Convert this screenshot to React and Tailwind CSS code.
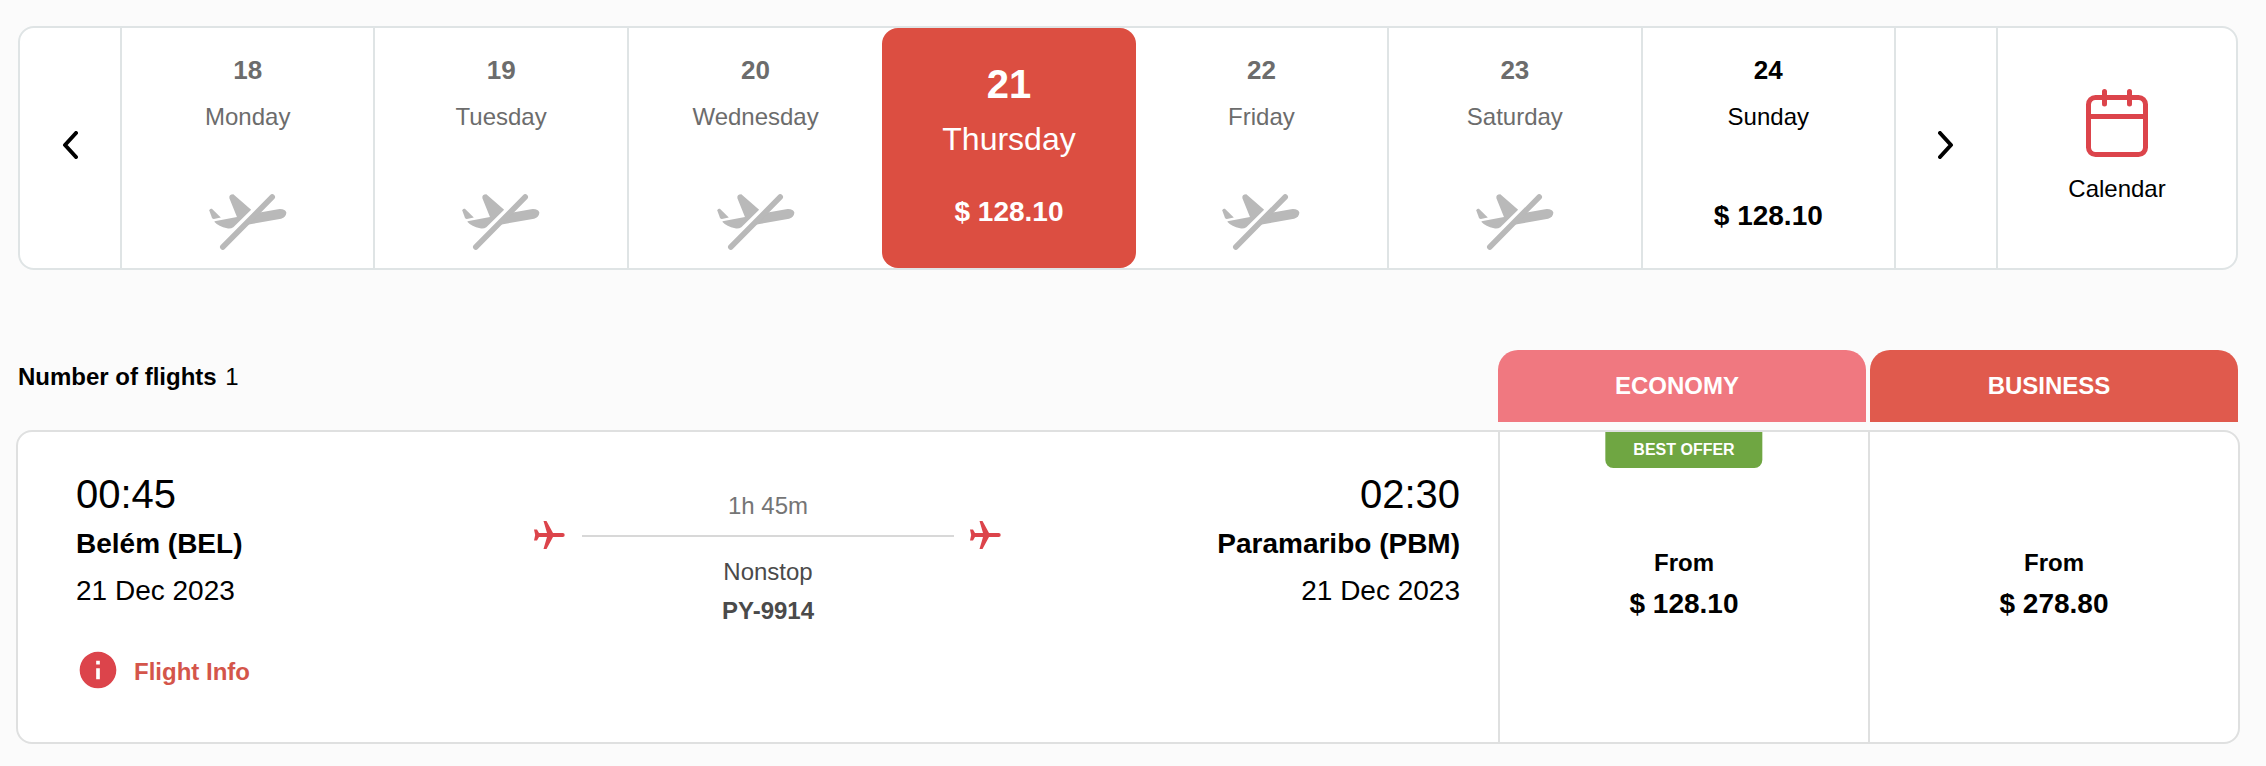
import React, { useState } from 'react';

const DAYS = [
    { date: 18, weekday: 'Monday' },
    { date: 19, weekday: 'Tuesday' },
    { date: 20, weekday: 'Wednesday' },
    { date: 21, weekday: 'Thursday', price: '$ 128.10' },
    { date: 22, weekday: 'Friday' },
    { date: 23, weekday: 'Saturday' },
    { date: 24, weekday: 'Sunday', price: '$ 128.10' },
];

const FLIGHT = {
    from: { time: '00:45', city: 'Belém (BEL)', date: '21 Dec 2023' },
    to: { time: '02:30', city: 'Paramaribo (PBM)', date: '21 Dec 2023' },
    duration: '1h 45m',
    stops: 'Nonstop',
    number: 'PY-9914',
    fares: [
        { cabin: 'Economy', price: '$ 128.10', best: true },
        { cabin: 'Business', price: '$ 278.80' },
    ],
};

const NoFlightIcon = () => (
    <svg viewBox="627 551 235 170" className="w-[78px] h-[56px] text-[#b9b9b9]" fill="currentColor" aria-hidden="true">
        <path d="M627 601Q628 594 635 596L662 622L641 627Q637 627 635 623Z" />
        <path d="M643 634L711 621L688 564Q686 552 700 552L754 599L700 652Q692 657 681 655Q655 650 643 636Z" />
        <path d="M780 607L836 597Q858 595 861 608Q860 621 845 626L738 645Z" />
        <path d="M818 560L668 712" stroke="currentColor" strokeWidth="17" strokeLinecap="round" />
    </svg>
);

const PlaneIcon = () => (
    <svg viewBox="0 0 32 32" className="w-8 h-8 shrink-0 text-[#dc444b]" fill="currentColor" aria-hidden="true">
        <path d="M9.500 1h3l6.500 12h9.700a2 2 0 0 1 0 4H19l-6.500 12h-3l3.500-12H5l-2 3.500H0l1.200-5.500L0 9.500h3l2 3.500h8z" />
    </svg>
);

const ChevronIcon = ({ d }) => (
    <svg viewBox="0 0 16 28" className="w-4 h-7" fill="none" stroke="currentColor" strokeWidth="4" strokeLinecap="round" strokeLinejoin="round" aria-hidden="true">
        <path d={d} />
    </svg>
);

const CalendarIcon = () => (
    <svg viewBox="0 0 62 68" className="w-[62px] h-[68px]" fill="none" stroke="#dc444b" strokeWidth="5" strokeLinecap="round" aria-hidden="true">
        <rect x="2.500" y="8.500" width="57" height="57" rx="7" />
        <path d="M3 27.500h56M18.500 2.500v12.500M43.500 2.500v12.500" />
    </svg>
);

const InfoIcon = () => (
    <svg viewBox="0 0 24 24" className="w-11 h-11" fill="#dc444b" aria-hidden="true">
        <path d="M12 2C6.480 2 2 6.480 2 12s4.480 10 10 10 10-4.480 10-10S17.520 2 12 2zm1 15h-2v-6h2v6zm0-8h-2V7h2v2z" />
    </svg>
);

const DayCell = ({ day, selected, divider, onSelect }) => {
    if (selected) {
        return (
            <button
                type="button"
                aria-pressed="true"
                className="flex flex-col items-center rounded-2xl bg-[#dc4e41] text-white pt-8 pb-10"
            >
                <span className="text-[40px] leading-[48px] font-bold">{day.date}</span>
                <span className="mt-[13px] text-[32px] leading-[36px]">{day.weekday}</span>
                <span className="mt-auto text-[28px] leading-[32px] font-bold">{day.price}</span>
            </button>
        );
    }

    return (
        <button
            type="button"
            aria-pressed="false"
            onClick={onSelect}
            className={`flex flex-col items-center pt-[25px] ${divider ? 'border-r-2 border-[#dfe4e5]' : ''} ${day.price ? 'text-black pb-9' : 'text-[#6c6c6c] pb-[18px]'}`}
        >
            <span className="text-[26px] leading-[34px] font-bold">{day.date}</span>
            <span className="mt-4 text-[24px] leading-[28px]">{day.weekday}</span>
            <span className="mt-auto text-[28px] leading-[32px] font-bold">{day.price || <NoFlightIcon />}</span>
        </button>
    );
};

const DateStrip = () => {
    const [selected, setSelected] = useState(21);

    return (
        <section className="mx-[2px] flex h-[244px] rounded-2xl border-2 border-[#dfe4e5] bg-white">
            <button type="button" aria-label="Previous days" className="w-[102px] pb-[6px] flex items-center justify-center border-r-2 border-[#dfe4e5]">
                <ChevronIcon d="M14 2L3 14L14 26" />
            </button>
            <div className="flex-1 grid grid-cols-7">
                {DAYS.map((day, i) => (
                    <DayCell
                        key={day.date}
                        day={day}
                        selected={day.date === selected}
                        divider={DAYS[i + 1]?.date !== selected}
                        onSelect={() => setSelected(day.date)}
                    />
                ))}
            </div>
            <button type="button" aria-label="Next days" className="w-[102px] pb-[6px] flex items-center justify-center border-r-2 border-[#dfe4e5]">
                <ChevronIcon d="M2 2L13 14L2 26" />
            </button>
            <button type="button" className="w-[238px] pb-1 flex flex-col items-center justify-center gap-[18px]">
                <CalendarIcon />
                <span className="text-[24px] leading-[28px]">Calendar</span>
            </button>
        </section>
    );
};

const Stop = ({ stop, className }) => (
    <div className={className}>
        <p className="text-[40px] leading-[52px]">{stop.time}</p>
        <p className="text-[28px] leading-[47px] font-bold">{stop.city}</p>
        <p className="text-[28px] leading-[47px]">{stop.date}</p>
    </div>
);

const FareCell = ({ fare }) => (
    <button type="button" className="relative w-[370px] flex flex-col items-center justify-center border-l-2 border-[#dfe0e0] pb-1">
        {fare.best && (
            <span className="absolute top-0 left-1/2 -translate-x-1/2 rounded-b-lg bg-[#6fa642] px-7 text-[16px] leading-[36px] font-bold text-white whitespace-nowrap">
                BEST OFFER
            </span>
        )}
        <span className="text-[24px] leading-[37px] font-bold">From</span>
        <span className="text-[28px] leading-[46px] font-bold">{fare.price}</span>
    </button>
);

const FlightCard = ({ flight }) => (
    <article className="mt-2 flex rounded-2xl border-2 border-[#dfe0e0] bg-white">
        <div className="flex-1 pt-9 pb-[50px] pl-[58px] pr-[38px]">
            <div className="grid grid-cols-[1fr_468px_1fr]">
                <Stop stop={flight.from} />
                <div className="pt-6 text-center text-[24px] text-[#4a4a4a]">
                    <p className="leading-[28px] text-[#757575]">{flight.duration}</p>
                    <div className="flex items-center justify-between gap-4">
                        <PlaneIcon />
                        <span className="flex-1 h-[2px] bg-[#d8d8d8]" />
                        <PlaneIcon />
                    </div>
                    <p className="leading-[39px]">{flight.stops}</p>
                    <p className="leading-[39px] font-bold">{flight.number}</p>
                </div>
                <Stop stop={flight.to} className="text-right" />
            </div>
            <button type="button" className="mt-[18px] flex items-end gap-[14px] text-[24px] leading-[40px] font-bold text-[#d4554a]">
                <InfoIcon />
                Flight Info
            </button>
        </div>
        {flight.fares.map((fare) => (
            <FareCell key={fare.cabin} fare={fare} />
        ))}
    </article>
);

const App = () => (
    <main className="min-h-screen bg-[#fbfbfb] pt-[26px] pb-[22px] pl-4 pr-[26px] font-['Liberation_Sans',Arial,sans-serif] text-black">
        <DateStrip />
        <div className="mx-[2px] mt-20 flex items-start justify-between">
            <h2 className="pt-[13px] text-[24px] leading-[28px] font-bold">
                Number of flights <span className="ml-[2px] font-normal">1</span>
            </h2>
            <div className="flex gap-1 text-[24px] font-bold text-white">
                <button type="button" className="w-[368px] h-[72px] pr-[10px] rounded-t-[20px] bg-[#f07880]">ECONOMY</button>
                <button type="button" className="w-[368px] h-[72px] pr-[10px] rounded-t-[20px] bg-[#e05a4d]">BUSINESS</button>
            </div>
        </div>
        <FlightCard flight={FLIGHT} />
    </main>
);

export default App;
